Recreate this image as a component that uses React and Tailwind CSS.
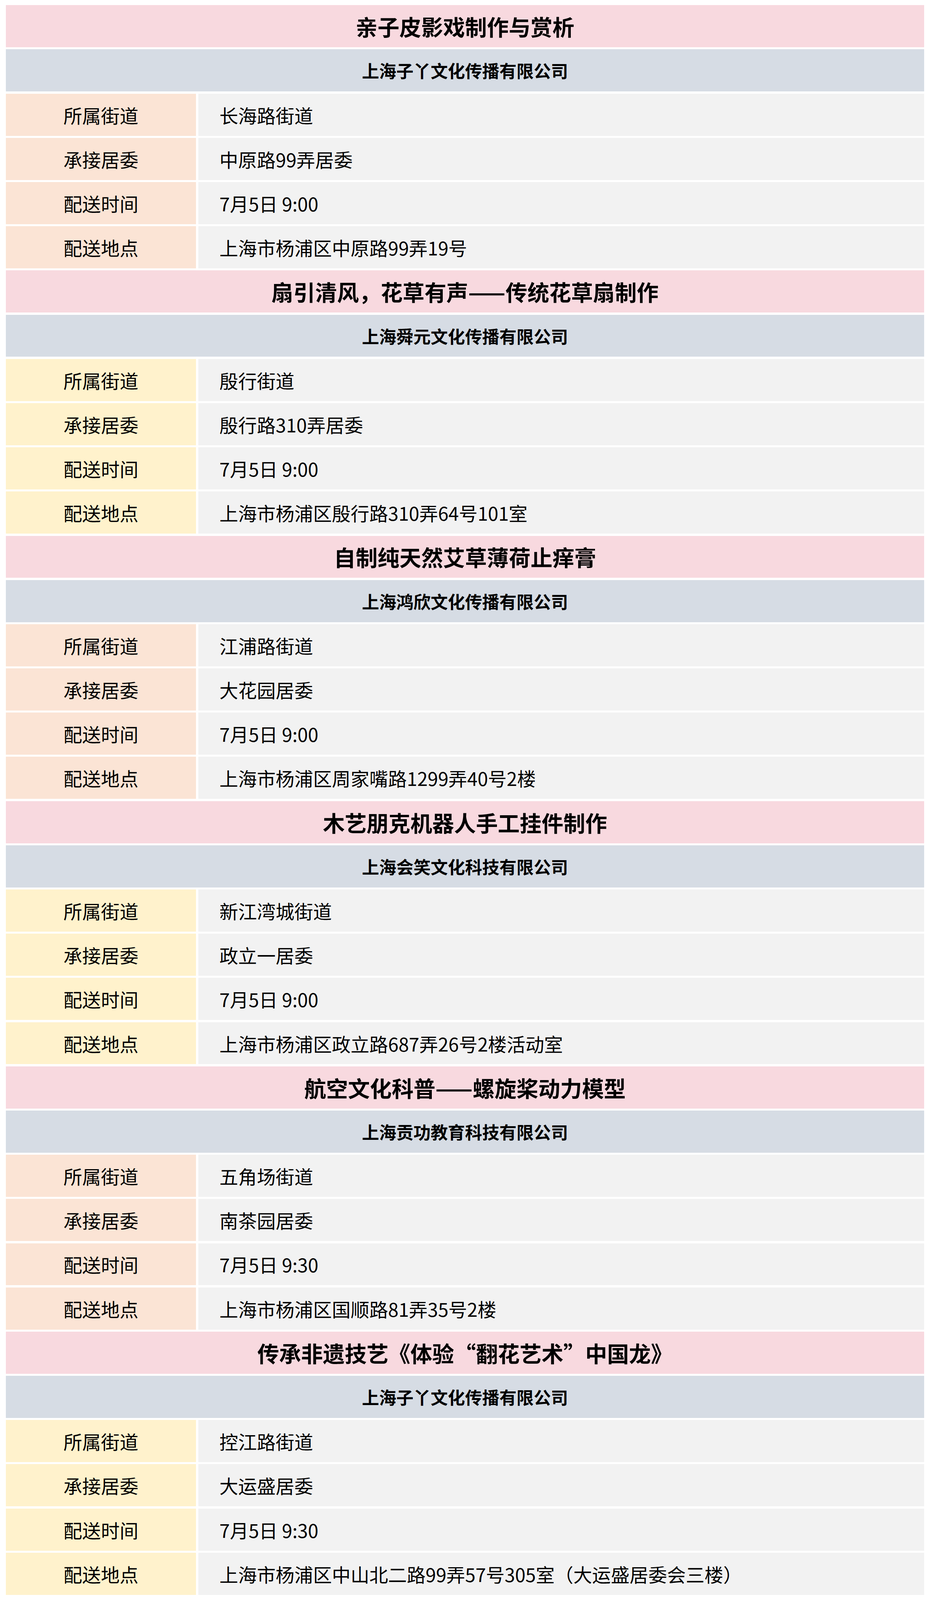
import React from 'react';

const events = [
  {
    title: '亲子皮影戏制作与赏析',
    org: '上海子丫文化传播有限公司',
    street: '长海路街道',
    committee: '中原路99弄居委',
    time: '7月5日 9:00',
    place: '上海市杨浦区中原路99弄19号',
  },
  {
    title: '扇引清风，花草有声——传统花草扇制作',
    org: '上海舜元文化传播有限公司',
    street: '殷行街道',
    committee: '殷行路310弄居委',
    time: '7月5日 9:00',
    place: '上海市杨浦区殷行路310弄64号101室',
  },
  {
    title: '自制纯天然艾草薄荷止痒膏',
    org: '上海鸿欣文化传播有限公司',
    street: '江浦路街道',
    committee: '大花园居委',
    time: '7月5日 9:00',
    place: '上海市杨浦区周家嘴路1299弄40号2楼',
  },
  {
    title: '木艺朋克机器人手工挂件制作',
    org: '上海会笑文化科技有限公司',
    street: '新江湾城街道',
    committee: '政立一居委',
    time: '7月5日 9:00',
    place: '上海市杨浦区政立路687弄26号2楼活动室',
  },
  {
    title: '航空文化科普——螺旋桨动力模型',
    org: '上海贡功教育科技有限公司',
    street: '五角场街道',
    committee: '南茶园居委',
    time: '7月5日 9:30',
    place: '上海市杨浦区国顺路81弄35号2楼',
  },
  {
    title: '传承非遗技艺《体验“翻花艺术”中国龙》',
    org: '上海子丫文化传播有限公司',
    street: '控江路街道',
    committee: '大运盛居委',
    time: '7月5日 9:30',
    place: '上海市杨浦区中山北二路99弄57号305室（大运盛居委会三楼）',
  },
];

// rows stretch to fill the window height (reference: 122px rows, 6px gaps, 15px margin at 4632px)
function InfoRow({ label, value, labelClass }) {
  return (
    <div className="flex min-h-0 flex-1 basis-0 gap-[6px]">
      <div className={`flex w-[487px] shrink-0 items-center justify-center text-[48px] ${labelClass}`}>
        {label}
      </div>
      <div className="flex flex-1 items-center bg-[#f2f2f2] pl-[54px] text-[48px]">{value}</div>
    </div>
  );
}

export default function App() {
  return (
    <div
      className="flex h-screen w-full flex-col gap-[0.1295vh] bg-white px-[15px] py-[0.3238vh] leading-none text-black"
      style={{ fontFamily: '"Noto Sans CJK SC", "Noto Sans", sans-serif' }}
    >
      {events.map((ev, i) => {
        const labelClass = i % 2 === 0 ? 'bg-[#fbe4d5]' : 'bg-[#fff2cc]';
        return (
          <React.Fragment key={i}>
            <div className="flex min-h-0 flex-1 basis-0 items-center justify-center bg-[#f8d9df] text-[56px] font-bold">
              {ev.title}
            </div>
            <div className="flex min-h-0 flex-1 basis-0 items-center justify-center bg-[#d6dce4] text-[44px] font-bold">
              {ev.org}
            </div>
            <InfoRow label="所属街道" value={ev.street} labelClass={labelClass} />
            <InfoRow label="承接居委" value={ev.committee} labelClass={labelClass} />
            <InfoRow label="配送时间" value={ev.time} labelClass={labelClass} />
            <InfoRow label="配送地点" value={ev.place} labelClass={labelClass} />
          </React.Fragment>
        );
      })}
    </div>
  );
}
